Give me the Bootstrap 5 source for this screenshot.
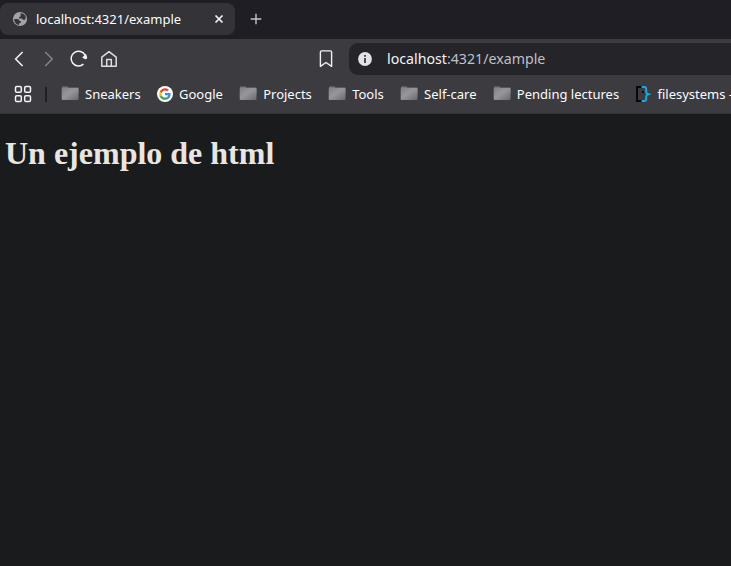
<!DOCTYPE html>
<html lang="es">
<head>
<meta charset="utf-8">
<meta name="viewport" content="width=device-width, initial-scale=1">
<title>localhost:4321/example</title>
<link href="https://cdn.jsdelivr.net/npm/bootstrap@5.3.0/dist/css/bootstrap.min.css" rel="stylesheet">
<style>
body{background:#1a1b1c;color:#fbfbfe;font:13px/18px "Noto Sans",sans-serif}
svg{display:block;flex:none}
.tab-strip{height:39px;background:#1f1e24;padding:3px 0 4px}
.browser-tab{width:235px;height:32px;background:#343338;border-radius:8px;padding:0 11px 0 12px}
.new-tab{margin-left:15px}
.tool-row{height:40px;background:#3c3b40;padding-left:11px}
.address{height:32px;margin-left:14px;padding-left:8px;background:#252429;border-radius:9px 0 0 9px;font-size:14.2px;color:#bfc0cb}
.address b{font-weight:400;color:#f2f2f5}
.address-text{margin-left:14px}
.forward{margin-left:14px}
.reload{margin-left:12px}
.home{margin-left:10px}
.save-mark{margin-left:198px}
.marks-row{height:35px;background:#3c3b40;border-bottom:1px solid #333237;padding:0 0 4px 14px;white-space:nowrap}
.divider{flex:none;width:2px;height:15px;background:#202024;margin:0 14px 0 13px}
.marks{gap:16.3px;flex:none}
.bookmark{gap:6px}
.page-title{font:700 32px/37px "Liberation Serif",serif;color:#e8e6e3;padding:21px 0 0 5px}
</style>
</head>
<body class="overflow-hidden">
<svg width="0" height="0" class="position-absolute" aria-hidden="true">
<defs>
<linearGradient id="fg" x1="0" y1="0" x2="1" y2="1"><stop offset="0" stop-color="#808086"/><stop offset=".45" stop-color="#96969d"/><stop offset="1" stop-color="#6a6a6d"/></linearGradient>
<symbol id="folder" viewBox="0 0 18 16"><path d="M1 1.3Q1 .4 1.8 .4H6.4Q7 .4 7.3 1.4H17Q17.5 1.4 17.5 2.2V8H1Z" fill="#77777b"/><path d="M.7 3Q.7 2 1.7 2H16.6Q17.5 2 17.5 3V13Q17.5 14 16.5 14H1.7Q.7 14 .7 13Z" fill="url(#fg)"/></symbol>
</defs>
</svg>
<header>
<div class="tab-strip d-flex align-items-center">
<div class="browser-tab d-flex align-items-center">
<svg width="16" height="16" viewBox="0 0 16 16"><circle cx="8" cy="8" r="7.1" fill="#a0a3a8"/><path d="M2.2 8H5.2Q7.6 8.2 7.8 10.2H9V11.4L7 12.6V14L4.6 13.2 2.7 11ZM8.4 2.3 11.2 2.7 13.2 4.6 13.8 7 12.8 8.8H10.8L10.2 7.4H7.2V5.8L8.8 5.4Z" fill="#343338"/></svg>
<span class="ms-2">localhost:4321/example</span>
<svg class="ms-auto" width="10" height="10" viewBox="0 0 10 10"><path d="M1.5 1.5 8.5 8.5M8.5 1.5 1.5 8.5" stroke="#f4f4f6" stroke-width="1.7"/></svg>
</div>
<svg class="new-tab" width="12" height="12" viewBox="0 0 12 12"><path d="M6 .7V11.3M.7 6H11.3" stroke="#c4c4c7" stroke-width="1.4"/></svg>
</div>
<div class="tool-row d-flex align-items-center">
<svg width="16" height="20" viewBox="0 0 16 20"><path d="M11.6 3 4.6 10l7 7" fill="none" stroke="#f4f4f6" stroke-width="1.5"/></svg>
<svg class="forward" width="16" height="20" viewBox="0 0 16 20"><path d="M4.2 3 11.2 10l-7 7" fill="none" stroke="#858489" stroke-width="1.5"/></svg>
<svg class="reload" width="20" height="20" viewBox="0 0 20 20"><path d="M14.5 15.1A7.4 7.4 0 1 1 16.2 6.4" fill="none" stroke="#f4f4f6" stroke-width="1.5"/><path d="M13.2 8.6 17 4.8 18.2 8.2Q18.4 10.4 16.2 10.2Z" fill="#f4f4f6"/></svg>
<svg class="home" width="20" height="20" viewBox="0 0 20 20"><path d="M2.8 8.1 10 2.6 17.2 8.1V17.2H2.8ZM7.7 17V10.4H12.3V17" fill="none" stroke="#dedee0" stroke-width="1.5" stroke-linejoin="round"/></svg>
<svg class="save-mark" width="18" height="20" viewBox="0 0 18 20"><path d="M4.6 1.9H13.4Q14.6 1.9 14.6 3.1V17.4L9 13.5 3.4 17.4V3.1Q3.4 1.9 4.6 1.9Z" fill="none" stroke="#f0f0f3" stroke-width="1.4" stroke-linejoin="round"/></svg>
<div class="address d-flex flex-fill align-items-center">
<svg width="16" height="16" viewBox="0 0 16 16"><circle cx="8" cy="8" r="6.9" fill="#e2e2e7"/><path d="M8 4V5.8M8 7V12" stroke="#3b3a40" stroke-width="1.8"/></svg>
<span class="address-text"><b>localhost</b>:4321/example</span>
</div>
</div>
<nav class="marks-row d-flex align-items-center">
<svg width="18" height="18" viewBox="0 0 18 18"><g fill="none" stroke="#f4f4f6" stroke-width="1.5"><rect x="1.5" y="1.5" width="5.8" height="5.8" rx="1.3"/><rect x="10.7" y="1.5" width="5.8" height="5.8" rx="1.3"/><rect x="1.5" y="10.7" width="5.8" height="5.8" rx="1.3"/><rect x="10.7" y="10.7" width="5.8" height="5.8" rx="1.3"/></g></svg>
<span class="divider"></span>
<div class="marks d-flex">
<span class="bookmark d-flex align-items-center"><svg width="18" height="16"><use href="#folder"/></svg>Sneakers</span>
<span class="bookmark d-flex align-items-center"><svg width="16" height="16" viewBox="0 0 48 48"><circle cx="24" cy="24" r="24" fill="#fff"/><g transform="translate(6.5 6.5) scale(.73)"><path fill="#EA4335" d="M24 9.5c3.5 0 6.7 1.2 9.2 3.6l6.9-6.9C35.9 2.4 30.5 0 24 0 14.6 0 6.5 5.4 2.6 13.2l8 6.2C12.4 13.7 17.7 9.5 24 9.5z"/><path fill="#4285F4" d="M47 24.6c0-1.6-.2-3.1-.4-4.6H24v9h12.9c-.6 3-2.3 5.5-4.8 7.2l7.7 6C44.4 38 47 31.8 47 24.6z"/><path fill="#FBBC05" d="M10.5 28.6a14.5 14.5 0 0 1 0-9.2l-8-6.2a24 24 0 0 0 0 21.6z"/><path fill="#34A853" d="M24 48c6.5 0 11.9-2.1 15.9-5.8l-7.7-6c-2.2 1.4-4.9 2.3-8.2 2.3-6.3 0-11.6-4.2-13.5-9.9l-8 6.2C6.5 42.6 14.6 48 24 48z"/></g></svg>Google</span>
<span class="bookmark d-flex align-items-center"><svg width="18" height="16"><use href="#folder"/></svg>Projects</span>
<span class="bookmark d-flex align-items-center"><svg width="18" height="16"><use href="#folder"/></svg>Tools</span>
<span class="bookmark d-flex align-items-center"><svg width="18" height="16"><use href="#folder"/></svg>Self-care</span>
<span class="bookmark d-flex align-items-center"><svg width="18" height="16"><use href="#folder"/></svg>Pending lectures</span>
<span class="bookmark d-flex align-items-center"><svg width="16" height="16" viewBox="0 0 16 16"><path d="M6 1H2V15H6" fill="none" stroke="#08080a" stroke-width="2"/><path d="M7 5H9V7H7Z" fill="#111"/><path d="M7 1H9Q11.2 1 11.2 3.3V6Q11.2 7.6 13.4 8.2 11.2 8.8 11.2 10.4V12.7Q11.2 15 9 15H7" fill="none" stroke="#18a8e4" stroke-width="2"/></svg>filesystems -</span>
</div>
</nav>
</header>
<main><h1 class="page-title m-0">Un ejemplo de html</h1></main>
<script src="https://cdn.jsdelivr.net/npm/bootstrap@5.3.0/dist/js/bootstrap.bundle.min.js"></script>
</body>
</html>
